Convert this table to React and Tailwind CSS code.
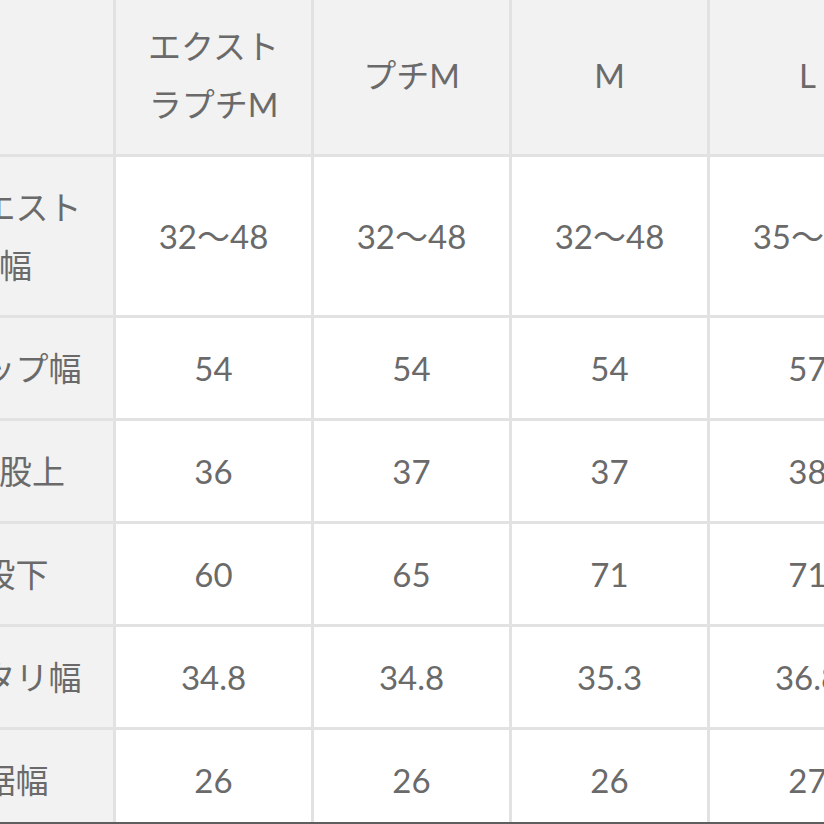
const sizes = ["エクストラプチM", "プチM", "M", "L", "LL"];

const rows = [
  { label: "ウエスト幅", values: ["32〜48", "32〜48", "32〜48", "35〜52", "38〜56"] },
  { label: "ヒップ幅", values: ["54", "54", "54", "57", "60"] },
  { label: "前股上", values: ["36", "37", "37", "38", "39"] },
  { label: "股下", values: ["60", "65", "71", "71", "72"] },
  { label: "ワタリ幅", values: ["34.8", "34.8", "35.3", "36.8", "38.3"] },
  { label: "裾幅", values: ["26", "26", "26", "27", "28"] },
];

const cell =
  "border-[3px] border-[#e2e2e2] px-[24px] py-[21px] text-center align-middle font-normal";

export default function App() {
  return (
    <div className="w-[824px] bg-white">
      <div className="h-[822px] overflow-hidden">
        <table className="ml-[-85px] mt-[-7px] w-[1188px] min-w-[1188px] table-fixed border-collapse text-[33px] leading-[58px] text-[#6a6a6a] font-['Lato','Noto_Sans_CJK_JP',sans-serif]">
          <colgroup>
            <col className="w-[198px]" />
            {sizes.map((s) => (
              <col key={s} className="w-[198px]" />
            ))}
          </colgroup>
          <thead>
            <tr className="bg-[#f2f2f2]">
              <th className={cell}></th>
              {sizes.map((s) => (
                <th key={s} className={cell}>
                  {s}
                </th>
              ))}
            </tr>
          </thead>
          <tbody>
            {rows.map((row) => (
              <tr key={row.label}>
                <th className={cell + " bg-[#f2f2f2]"}>{row.label}</th>
                {row.values.map((v, i) => (
                  <td key={i} className={cell + " bg-white"}>
                    {v}
                  </td>
                ))}
              </tr>
            ))}
          </tbody>
        </table>
      </div>
      <div className="h-[2px] bg-[#5e5e5e]"></div>
    </div>
  );
}
